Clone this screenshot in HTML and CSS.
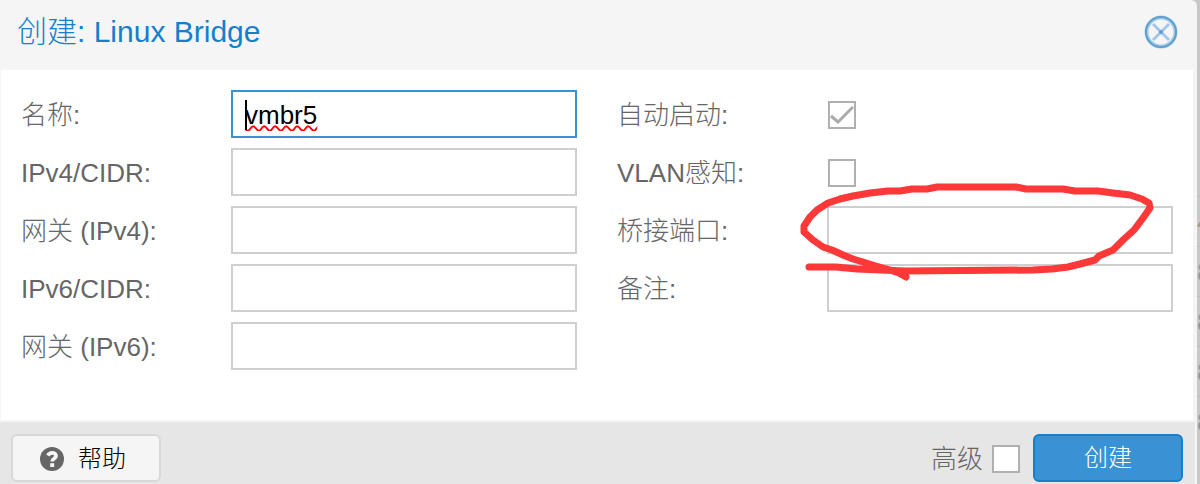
FILE: index.html
```html
<!DOCTYPE html>
<html lang="zh-CN">
<head>
<meta charset="utf-8">
<title>创建: Linux Bridge</title>
<link rel="stylesheet" href="styles.css">
</head>
<body>
<div class="page">
  <form class="dialog">
    <header class="head">
      <h1 class="title">创建: Linux Bridge</h1>
      <button class="close" type="button" aria-label="关闭">
        <svg width="34" height="34" viewBox="0 0 34 34" fill="none">
          <circle cx="17" cy="17" r="14.500" stroke="#a9cce6" stroke-width="4"/>
          <circle cx="17" cy="17" r="15" stroke="#5b9fd0" stroke-width="2"/>
          <path d="M9 9 25 25M25 9 9 25" stroke="#a3c6ea" stroke-width="3"/>
          <circle cx="17" cy="17" r="2" fill="#5a9fd6"/>
        </svg>
      </button>
    </header>
    <main class="fields">
      <div class="column">
        <div class="row">
          <label for="name">名称:</label>
          <div class="control caret"><input class="text name" id="name" type="text" value="vmbr5" spellcheck="false"></div>
        </div>
        <div class="row">
          <label for="ip4">IPv4/CIDR:</label>
          <div class="control"><input class="text" id="ip4" type="text"></div>
        </div>
        <div class="row">
          <label for="gw4">网关 (IPv4):</label>
          <div class="control"><input class="text" id="gw4" type="text"></div>
        </div>
        <div class="row">
          <label for="ip6">IPv6/CIDR:</label>
          <div class="control"><input class="text" id="ip6" type="text"></div>
        </div>
        <div class="row">
          <label for="gw6">网关 (IPv6):</label>
          <div class="control"><input class="text" id="gw6" type="text"></div>
        </div>
      </div>
      <div class="column">
        <div class="row">
          <label for="auto">自动启动:</label>
          <div class="control"><input class="check" id="auto" type="checkbox" checked></div>
        </div>
        <div class="row">
          <label for="vlan">VLAN感知:</label>
          <div class="control"><input class="check" id="vlan" type="checkbox"></div>
        </div>
        <div class="row">
          <label for="ports">桥接端口:</label>
          <div class="control">
            <input class="text" id="ports" type="text">
            <svg class="marker" width="360" height="106" viewBox="800 180 360 106" fill="none" stroke="#fc3838" stroke-width="7" stroke-linecap="round" stroke-linejoin="round" aria-hidden="true">
              <path d="M906 277 899 273 890 270 876 266 863 262 853 259 843 255 832 250 823 247 813 240 804 232 804 226 810 217 817 210 828 203 840 199 853 196 870 193 888 191 900 191 912 189 927 189 937 187 980 187 1016 187 1026 189 1063 189 1075 191 1098 191 1113 193 1130 195 1142 199 1149 203 1150 208 1143 218 1134 230 1123 240 1113 250 1099 256 1095 260 1080 264 1068 267 1052 269 1033 270 905 271 857 269 836 267 809 267"/>
            </svg>
          </div>
        </div>
        <div class="row">
          <label for="note">备注:</label>
          <div class="control"><input class="text" id="note" type="text"></div>
        </div>
      </div>
    </main>
    <footer class="foot">
      <button class="button help" type="button">
        <svg width="24" height="24" viewBox="0 0 24 24" fill="none" aria-hidden="true">
          <circle cx="12" cy="12" r="12" fill="#666"/>
          <path d="M7.800 8.500C9 6.500 10.300 5.900 12.200 5.900C14.400 5.900 16 7.200 16 9C16 11.500 12.200 11.500 12.200 14.600" stroke="#f5f5f5" stroke-width="3.800"/>
          <path d="M10.200 16.200h4v3.800h-4z" fill="#f5f5f5"/>
        </svg>
        帮助
      </button>
      <div class="actions">
        <label for="advanced">高级</label>
        <input class="check" id="advanced" type="checkbox">
        <button class="button create" type="submit">创建</button>
      </div>
    </footer>
  </form>
  <aside class="behind" aria-hidden="true">
    <span class="cell tinted">4</span>
    <span class="cell">8</span>
    <span class="cell">8</span>
    <span class="cell">8</span>
    <span class="cell">8</span>
  </aside>
</div>
</body>
</html>
```
FILE: styles.css
```css
* {
  box-sizing: border-box;
}

body {
  margin: 0;
  font-family: "Liberation Sans", "Noto Sans CJK SC", sans-serif;
  font-size: 26px;
  font-weight: 300;
  line-height: 32px;
  color: #666;
}

.page {
  display: flex;
  min-height: 100vh;
  background: #c8c8c8;
}

.dialog {
  flex: 1;
  min-width: 0;
  display: flex;
  flex-direction: column;
  background: #f5f5f5;
  border-top-right-radius: 6px;
}

.head {
  display: flex;
  align-items: center;
  justify-content: space-between;
  padding: 12px 19px 18px 17px;
}

.title {
  margin: 0;
  font-size: 30px;
  font-weight: 300;
  line-height: 40px;
  color: #157fcc;
}

.close {
  display: flex;
  padding: 0;
  border: 0;
  background: none;
}

.fields {
  flex: 1;
  display: grid;
  grid-template-columns: 1fr 1fr;
  gap: 40px;
  margin: 0 4px 2px 1px;
  padding: 20px;
  background: #fff;
}

.column {
  display: flex;
  flex-direction: column;
  gap: 10px;
}

.row {
  display: flex;
  align-items: center;
  height: 48px;
}

.row label {
  flex: 0 0 210px;
  padding-top: 2px;
}

.control {
  position: relative;
  flex: 1;
  min-width: 0;
  display: flex;
}

.text {
  width: 100%;
  height: 48px;
  padding: 2px 12px 0;
  border: 2px solid #cfcfcf;
  border-radius: 0;
  background: #fff;
  font: inherit;
  color: #000;
  outline: 0;
}

.name {
  border-color: #3892d4;
  text-decoration: underline wavy #f00 2px;
}

.caret::before {
  content: "";
  position: absolute;
  left: 14px;
  top: 10px;
  width: 2px;
  height: 30px;
  background: #000;
}

.check {
  appearance: none;
  width: 28px;
  height: 28px;
  margin: 2px 1px 0;
  border: 2px solid #b0b0b0;
  background: #fff;
}

.check:checked {
  background: #fff url("data:image/svg+xml,%3Csvg xmlns='http://www.w3.org/2000/svg' viewBox='0 0 24 24' fill='none' stroke='%23aaa' stroke-width='3'%3E%3Cpath d='M1 13 8 19 23 4'/%3E%3C/svg%3E") center / 24px 24px no-repeat;
}

.marker {
  position: absolute;
  left: -27px;
  top: -26px;
  z-index: 1;
  pointer-events: none;
}

.foot {
  display: flex;
  align-items: center;
  justify-content: space-between;
  margin-right: 2px;
  padding: 12px 12px 2px 11px;
  background: #e6e6e6;
}

.actions {
  display: flex;
  align-items: center;
}

.actions label {
  margin-right: 8px;
  padding-top: 2px;
}

.button {
  display: flex;
  align-items: center;
  justify-content: center;
  gap: 14px;
  width: 150px;
  height: 48px;
  padding: 0;
  border: 2px solid #d8d8d8;
  border-radius: 6px;
  background: #f5f5f5;
  font: inherit;
  font-size: 24px;
  color: #000;
}

.help {
  padding: 2px 6px 0 0;
}

.create {
  margin-left: 12px;
  border-color: #157fcc;
  background: #3892d4;
  color: #fff;
}

.behind {
  flex: 0 0 3px;
  overflow: hidden;
  padding-top: 196px;
  color: #8f979f;
}

.cell {
  display: block;
  height: 50px;
  border-top: 1px solid #bcbcbc;
  line-height: 50px;
}

.tinted {
  color: #a99b80;
}
```
